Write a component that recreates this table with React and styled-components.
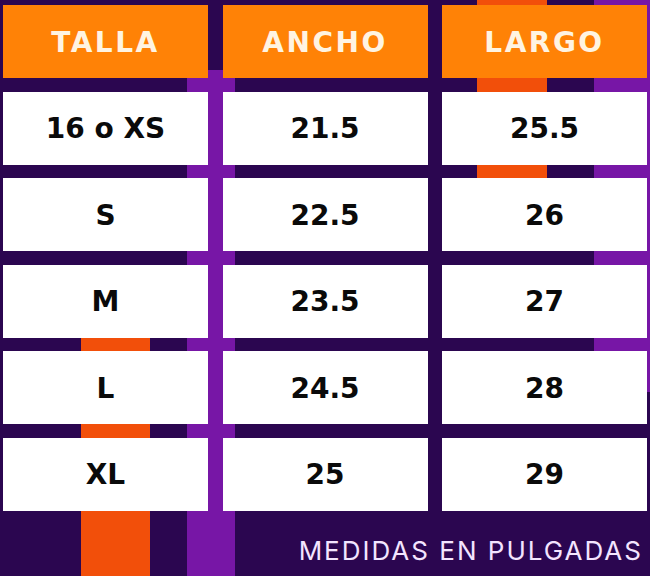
import styled, { createGlobalStyle } from "styled-components";

const sizes = [
  { talla: "16 o XS", ancho: "21.5", largo: "25.5" },
  { talla: "S", ancho: "22.5", largo: "26" },
  { talla: "M", ancho: "23.5", largo: "27" },
  { talla: "L", ancho: "24.5", largo: "28" },
  { talla: "XL", ancho: "25", largo: "29" },
];

const headers = ["TALLA", "ANCHO", "LARGO"];

export default function App() {
  return (
    <>
      <GlobalStyle />
      <Page>
        <Table>
          {headers.map((h) => (
            <HeadCell key={h}>{h}</HeadCell>
          ))}
          {sizes.map((row) => (
            <Row key={row.talla}>
              <Cell>{row.talla}</Cell>
              <Cell>{row.ancho}</Cell>
              <Cell>{row.largo}</Cell>
            </Row>
          ))}
        </Table>
        <Footer>MEDIDAS EN PULGADAS</Footer>
      </Page>
    </>
  );
}

const GlobalStyle = createGlobalStyle`
  body {
    margin: 0;
    background: #2b0650;
  }
`;

// franjas de fondo como capas del background
const Page = styled.main`
  width: 650px;
  height: 576px;
  box-sizing: border-box;
  padding: 5px 3px 0 3px;
  display: flex;
  flex-direction: column;
  overflow: hidden;
  background:
    linear-gradient(#7716a6, #7716a6) 187px 70px / 48px 506px no-repeat,
    linear-gradient(#f24f0a, #f24f0a) 81px 300px / 69px 276px no-repeat,
    linear-gradient(#f24f0a, #f24f0a) 477px 0 / 70px 178px no-repeat,
    linear-gradient(#7716a6, #7716a6) 594px 0 / 56px 392px no-repeat,
    #2b0650;
`;

const Table = styled.section`
  display: grid;
  grid-template-columns: repeat(3, 205px);
  grid-auto-rows: 73px;
  column-gap: 14.5px;
  row-gap: 13.6px;
`;

const Row = styled.div`
  display: contents;
`;

const HeadCell = styled.div`
  display: flex;
  align-items: center;
  justify-content: center;
  background: #ff8206;
  color: #fff4e2;
  font-family: "DejaVu Sans", sans-serif;
  font-weight: bold;
  font-size: 28px;
  letter-spacing: 2.5px;
  padding-top: 2px;
  box-sizing: border-box;
`;

const Cell = styled.div`
  display: flex;
  align-items: center;
  justify-content: center;
  background: #ffffff;
  color: #0a0a0a;
  font-family: "DejaVu Sans", sans-serif;
  font-weight: bold;
  font-size: 28px;
  padding-top: 1px;
  box-sizing: border-box;
`;

const Footer = styled.p`
  margin: 27.5px 4px 0 0;
  text-align: right;
  color: #f3e4ff;
  font-family: Inter, sans-serif;
  font-size: 26px;
  font-weight: 400;
  letter-spacing: 2px;
  line-height: 1;
`;
